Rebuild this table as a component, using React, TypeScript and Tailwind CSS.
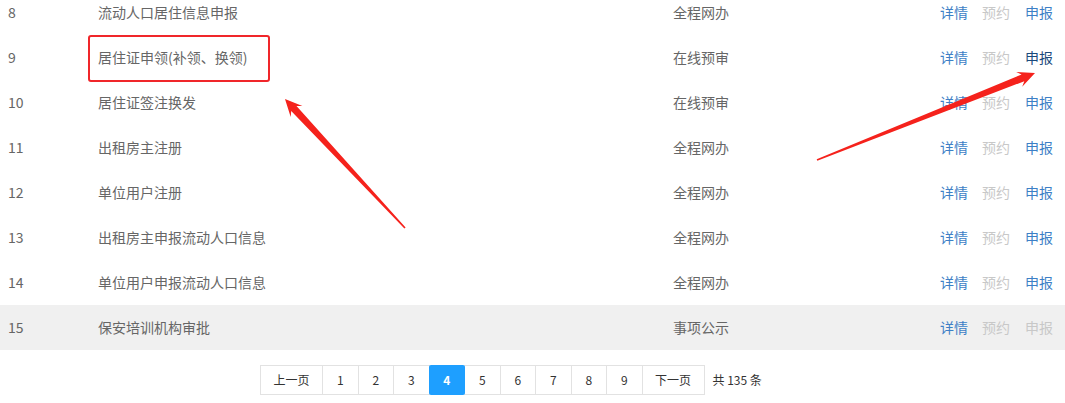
import React from "react";

type Row = { n: number; name: string; type: string; hot?: boolean; disabledApply?: boolean; gray?: boolean };

const rows: Row[] = [
  { n: 8, name: "流动人口居住信息申报", type: "全程网办" },
  { n: 9, name: "居住证申领(补领、换领)", type: "在线预审", hot: true },
  { n: 10, name: "居住证签注换发", type: "在线预审" },
  { n: 11, name: "出租房主注册", type: "全程网办" },
  { n: 12, name: "单位用户注册", type: "全程网办" },
  { n: 13, name: "出租房主申报流动人口信息", type: "全程网办" },
  { n: 14, name: "单位用户申报流动人口信息", type: "全程网办" },
  { n: 15, name: "保安培训机构审批", type: "事项公示", disabledApply: true, gray: true },
];

function arrowPoints(tail: [number, number], tip: [number, number]) {
  const dx = tip[0] - tail[0];
  const dy = tip[1] - tail[1];
  const len = Math.hypot(dx, dy);
  const ux = dx / len;
  const uy = dy / len;
  const nx = -uy;
  const ny = ux;
  const headLen = 17;
  const headW = 8;
  const neckLen = 13;
  const neckW = 3.6;
  const tailW = 0.8;
  const p = (x: number, y: number) => `${x.toFixed(1)},${y.toFixed(1)}`;
  const bx = tip[0] - ux * headLen;
  const by = tip[1] - uy * headLen;
  const kx = tip[0] - ux * neckLen;
  const ky = tip[1] - uy * neckLen;
  return [
    p(tip[0], tip[1]),
    p(bx + nx * headW, by + ny * headW),
    p(kx + nx * neckW, ky + ny * neckW),
    p(tail[0] + nx * tailW, tail[1] + ny * tailW),
    p(tail[0] - nx * tailW, tail[1] - ny * tailW),
    p(kx - nx * neckW, ky - ny * neckW),
    p(bx - nx * headW, by - ny * headW),
  ].join(" ");
}

export default function App() {
  const pages = ["1", "2", "3", "4", "5", "6", "7", "8", "9"];
  return (
    <div
      className="relative w-[1065px] h-[403px] overflow-hidden bg-white text-[14px] text-[#666]"
      style={{ fontFamily: '"Noto Sans CJK SC", "Noto Sans", sans-serif' }}
    >
      <div className="-mt-[10px]">
        {rows.map((r) => (
          <div key={r.n} className={`flex items-center h-[45px] ${r.gray ? "bg-[#f0f0f0]" : "bg-white"}`}>
            <div className="w-[98px] pl-[8px]">{r.n}</div>
            <div className="w-[575px]">
              {r.hot ? (
                <span className="relative">
                  {r.name}
                  <span className="absolute -left-[10px] -top-[12px] w-[182px] h-[47px] border-2 border-[#f0262a] rounded-[3px]" />
                </span>
              ) : (
                r.name
              )}
            </div>
            <div className="flex-1">{r.type}</div>
            <div className="flex items-center pr-[12px]">
              <span className="text-[#3d7fc6]">详情</span>
              <span className="ml-[14px] text-[#c8c8c8]">预约</span>
              <span
                className={`ml-[15px] ${
                  r.disabledApply ? "text-[#c8c8c8]" : r.hot ? "text-[#1b4a7c]" : "text-[#3d7fc6]"
                }`}
              >
                申报
              </span>
            </div>
          </div>
        ))}
      </div>

      <div className="flex items-center ml-[260px] mt-[15px] text-[12px] text-[#333]">
        <span className="flex items-center justify-center h-[30px] w-[63px] border border-[#e2e2e2] bg-white">上一页</span>
        {pages.map((p) =>
          p === "4" ? (
            <span
              key={p}
              className="relative z-10 flex items-center justify-center h-[30px] w-[36.5px] -ml-px rounded-[2px] bg-[#1e9fff] text-white font-bold"
            >
              {p}
            </span>
          ) : (
            <span
              key={p}
              className="flex items-center justify-center h-[30px] w-[36.5px] -ml-px border border-[#e2e2e2] bg-white"
            >
              {p}
            </span>
          )
        )}
        <span className="flex items-center justify-center h-[30px] w-[63px] -ml-px border border-[#e2e2e2] bg-white">下一页</span>
        <span className="ml-[8px]">共 135 条</span>
      </div>

      <svg className="absolute left-0 top-0 pointer-events-none" width="1065" height="403">
        <polygon points={arrowPoints([405, 228], [285, 99])} fill="#f5221c" />
        <polygon points={arrowPoints([817, 160], [1035, 73])} fill="#f5221c" />
      </svg>
    </div>
  );
}
